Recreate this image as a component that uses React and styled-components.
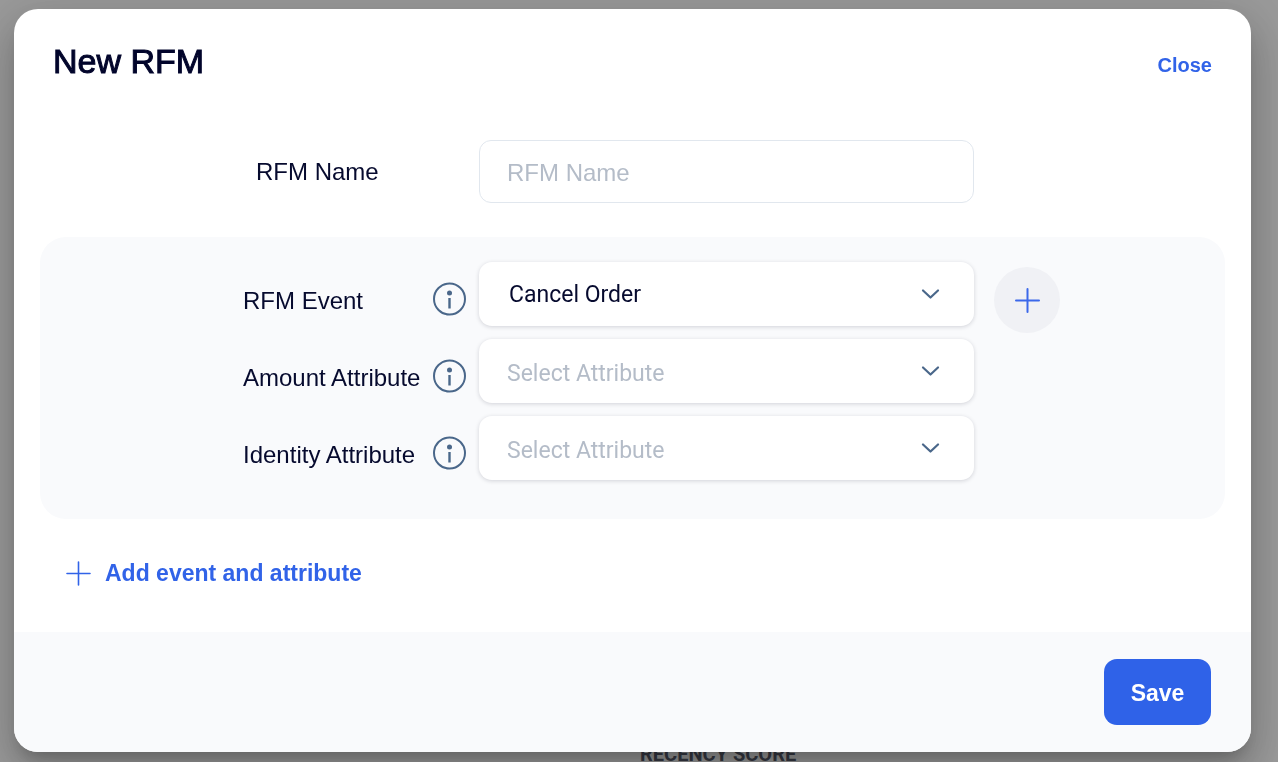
import React, { useState } from "react";
import styled, { createGlobalStyle } from "styled-components";

const SANS = '"Liberation Sans", Arial, sans-serif';
const ROBOTO = 'Roboto, "Liberation Sans", sans-serif';

const GlobalStyle = createGlobalStyle`
  *, *::before, *::after { box-sizing: border-box; }
  body {
    margin: 0;
    background: #ffffff;
    color: #060a2e;
    font-family: ${SANS};
    overflow: hidden;
  }
  button { font-family: inherit; border: 0; cursor: pointer; }
`;

const Page = styled.main`
  padding: 742px 0 0 640px;
`;

const ColumnHeading = styled.h2`
  margin: 0;
  font: 700 20px/24px ${ROBOTO};
  color: #5b5f70;
`;

const Backdrop = styled.div`
  position: fixed;
  inset: 0;
  padding: 9px 27px 10px 14px;
  background: rgba(0, 0, 0, 0.4);
`;

const Dialog = styled.section`
  display: flex;
  flex-direction: column;
  min-height: 100%;
  border-radius: 24px;
  background: #ffffff;
  overflow: hidden;
  box-shadow:
    0 11px 15px -7px rgba(0, 0, 0, 0.2),
    0 24px 38px 3px rgba(0, 0, 0, 0.14),
    0 9px 46px 8px rgba(0, 0, 0, 0.12);
`;

const Header = styled.header`
  display: flex;
  justify-content: space-between;
  align-items: flex-end;
  padding: 32px 39px 0;
`;

const Title = styled.h1`
  margin: 0;
  padding-bottom: 2px;
  font-size: 34px;
  line-height: 40px;
  font-weight: 400;
  -webkit-text-stroke: 1px currentColor;
  color: #02052b;
`;

const CloseButton = styled.button`
  padding: 0;
  background: none;
  color: #3163e8;
  font-size: 20px;
  line-height: 36px;
  font-weight: 700;
`;

const Form = styled.form`
  display: flex;
  flex-direction: column;
  flex: 1;
`;

const Body = styled.div`
  flex: 1;
  padding: 57px 26px 0;
`;

const NameRow = styled.div`
  display: flex;
  align-items: center;
  padding-left: 216px;
`;

const Label = styled.label`
  flex: none;
  font-size: 24px;
  line-height: 32px;
  white-space: nowrap;
`;

const NameLabel = styled(Label)`
  width: 223px;
`;

const NameInput = styled.input`
  width: 495px;
  height: 63px;
  padding: 2px 27px 0;
  border: 1px solid #e1e7ee;
  border-radius: 12px;
  background: #ffffff;
  color: #060a2e;
  font: 24px ${SANS};
  &::placeholder { color: #b4bcc8; opacity: 1; }
`;

const Panel = styled.div`
  display: flex;
  align-items: flex-start;
  gap: 20px;
  margin-top: 34px;
  padding: 25px 26px 39px 203px;
  border-radius: 26px;
  background: #f9fafc;
`;

const Fields = styled.div`
  display: grid;
  gap: 13px;
`;

const FieldRow = styled.div`
  display: grid;
  grid-template-columns: 190px 34px 495px;
  align-items: center;
  height: 64px;
`;

const FieldLabel = styled(Label)`
  padding-top: 14px;
`;

const InfoButton = styled.button`
  display: flex;
  padding: 10px 0 0;
  background: none;
  color: #4a678a;
`;

const SelectBox = styled.div`
  display: grid;
  align-items: center;
  margin-left: 12px;
  width: 495px;
  > * { grid-area: 1 / 1; }
  > svg {
    justify-self: end;
    margin-right: 34px;
    color: #4a678a;
    pointer-events: none;
  }
`;

const Select = styled.select`
  appearance: none;
  width: 100%;
  height: 64px;
  padding: ${(p) => (p.$empty ? "4px 70px 0 28px" : "0 70px 0 30px")};
  border: 0;
  border-radius: 13px;
  background: #ffffff;
  box-shadow: 0 1px 4px rgba(20, 20, 40, 0.17);
  color: ${(p) => (p.$empty ? "#b4bcc8" : "#060a2e")};
  font: 23px ${ROBOTO};
`;

const RoundButton = styled.button`
  display: grid;
  place-items: center;
  flex: none;
  width: 66px;
  height: 66px;
  margin: 5px 0 0 12px;
  padding: 0;
  border-radius: 50%;
  background: #f0f1f5;
  color: #3b68ea;
`;

const AddButton = styled.button`
  display: flex;
  align-items: center;
  gap: 14px;
  margin: 38px 0 0 26px;
  padding: 0;
  background: none;
  color: #3163e8;
  font-size: 23px;
  line-height: 32px;
  font-weight: 700;
`;

const Footer = styled.footer`
  display: flex;
  justify-content: flex-end;
  padding: 27px 40px;
  background: #f9fafc;
`;

const SaveButton = styled.button`
  width: 107px;
  height: 66px;
  padding: 2px 0 0;
  border-radius: 13px;
  background: #2f62e8;
  color: #ffffff;
  font-size: 23px;
  font-weight: 700;
`;

const InfoIcon = () => (
  <svg width="34" height="34" viewBox="0 0 34 34" aria-hidden="true">
    <circle cx="16.5" cy="17" r="15.5" fill="none" stroke="currentColor" strokeWidth="2" />
    <circle cx="16.5" cy="11" r="2.5" fill="currentColor" />
    <path d="M16.5 16v10.5" stroke="currentColor" strokeWidth="2.4" />
  </svg>
);

const Chevron = () => (
  <svg width="20" height="12" viewBox="0 0 20 12" fill="none" aria-hidden="true">
    <path d="M3 2.5L10.5 9.5L18 2.5" stroke="currentColor" strokeWidth="2.2" strokeLinecap="round" strokeLinejoin="round" />
  </svg>
);

const Plus = ({ weight }) => (
  <svg width="25" height="25" viewBox="0 0 25 25" fill="none" aria-hidden="true">
    <path d="M12.5 1v23M1 12.5h23" stroke="currentColor" strokeWidth={weight} strokeLinecap="round" />
  </svg>
);

function SelectField({ id, label, options, placeholder, initial = "" }) {
  const [value, setValue] = useState(initial);
  return (
    <FieldRow>
      <FieldLabel htmlFor={id}>{label}</FieldLabel>
      <InfoButton type="button" aria-label={`About ${label}`}>
        <InfoIcon />
      </InfoButton>
      <SelectBox>
        <Select id={id} value={value} $empty={!value} onChange={(e) => setValue(e.target.value)}>
          {placeholder && <option value="">{placeholder}</option>}
          {options.map((o) => (
            <option key={o}>{o}</option>
          ))}
        </Select>
        <Chevron />
      </SelectBox>
    </FieldRow>
  );
}

export default function App() {
  return (
    <>
      <GlobalStyle />
      <Page>
        <ColumnHeading>RECENCY SCORE</ColumnHeading>
      </Page>
      <Backdrop>
        <Dialog role="dialog" aria-modal="true" aria-labelledby="dialog-title">
          <Header>
            <Title id="dialog-title">New RFM</Title>
            <CloseButton type="button">Close</CloseButton>
          </Header>
          <Form onSubmit={(e) => e.preventDefault()}>
            <Body>
              <NameRow>
                <NameLabel htmlFor="rfm-name">RFM Name</NameLabel>
                <NameInput id="rfm-name" type="text" placeholder="RFM Name" />
              </NameRow>
              <Panel>
                <Fields>
                  <SelectField id="rfm-event" label="RFM Event" options={["Cancel Order"]} initial="Cancel Order" />
                  <SelectField id="amount" label="Amount Attribute" options={[]} placeholder="Select Attribute" />
                  <SelectField id="identity" label="Identity Attribute" options={[]} placeholder="Select Attribute" />
                </Fields>
                <RoundButton type="button" aria-label="Add event">
                  <Plus weight="2" />
                </RoundButton>
              </Panel>
              <AddButton type="button">
                <Plus weight="1.6" />
                Add event and attribute
              </AddButton>
            </Body>
            <Footer>
              <SaveButton type="submit">Save</SaveButton>
            </Footer>
          </Form>
        </Dialog>
      </Backdrop>
    </>
  );
}
